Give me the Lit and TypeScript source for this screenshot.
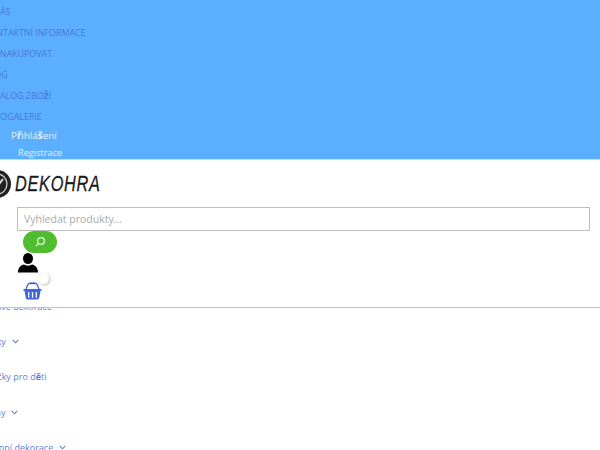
import { LitElement, html, css } from "lit";
import { customElement } from "lit/decorators.js";

const topMenu = [
  html`O NÁS`,
  html`KONTAKTNÍ INFORMACE`,
  html`JAK NAKUPOVAT`,
  html`BLOG`,
  html`KATALOG ZBO<b>Ž</b>Í`,
  html`FOTOGALERIE`,
];

const categories = [
  { label: html`Zdravé dekorace`, arrow: true },
  { label: html`Sošky`, arrow: true },
  { label: html`Hračky pro d<b>ě</b>ti`, arrow: false },
  { label: html`Rámy`, arrow: true },
  { label: html`Stranní dekorace`, arrow: true },
];

@customElement("app-root")
export class AppRoot extends LitElement {
  static styles = css`
    :host {
      display: block;
      width: 600px;
      height: 450px;
      overflow: hidden;
      background: #fff;
      font-family: "Open Sans", sans-serif;
    }

    .topbar {
      height: 160px;
      box-sizing: border-box;
      padding-top: 1px;
      background: #5caeff;
      border-bottom: 1px solid #b5e0ff;
    }

    .menu {
      list-style: none;
      margin: 0 0 0 -16px;
      padding: 0;
    }

    .menu li {
      height: 21px;
      line-height: 21px;
      font-size: 8.9px;
      color: #4679de;
      white-space: nowrap;
    }

    .account {
      display: flex;
      flex-direction: column;
      align-items: flex-start;
      color: #e6f3ff;
      line-height: 17px;
    }

    .account .login {
      margin-left: 11px;
      font-size: 9.8px;
    }

    .account .register {
      margin-left: 18px;
      font-size: 9.2px;
    }

    header {
      position: relative;
      z-index: 1;
      height: 148px;
      box-sizing: border-box;
      background: #fff;
      border-bottom: 1px solid #c4c4c4;
    }

    .logo {
      display: flex;
      align-items: center;
      gap: 3px;
      height: 47px;
      margin-left: -18px;
    }

    .logo span {
      font-family: "Liberation Sans", sans-serif;
      font-size: 22px;
      font-style: italic;
      color: #1b1b1b;
      letter-spacing: 1px;
      -webkit-text-stroke: 0.3px #1b1b1b;
      transform: scaleX(0.74);
      transform-origin: left center;
    }

    .search {
      box-sizing: border-box;
      display: block;
      width: 573px;
      height: 24px;
      margin-left: 17px;
      padding: 0 6px;
      border: 1px solid #bdbdbd;
      font-size: 10.5px;
      line-height: 22px;
      color: #aaaaaa;
    }

    .go {
      display: flex;
      align-items: center;
      justify-content: center;
      width: 34px;
      height: 22px;
      margin-left: 23px;
      border-radius: 11px;
      background: #4fbd2f;
    }

    .user {
      display: block;
      margin-left: 18px;
    }

    .cart {
      display: block;
      margin: 9px 0 0 23px;
    }

    .toggle {
      position: absolute;
      left: 38px;
      top: 113px;
      width: 11px;
      height: 11px;
      border-radius: 50%;
      background: #fff;
      box-shadow: 1px 1px 3px rgba(0, 0, 0, 0.25);
    }

    .categories {
      list-style: none;
      margin: -19px 0 0 -18px;
      padding: 0;
    }

    .categories li {
      display: flex;
      align-items: center;
      gap: 6px;
      height: 35.2px;
      font-size: 9px;
      color: #5e7fd6;
      white-space: nowrap;
    }
  `;

  render() {
    return html`
      <div class="topbar">
        <ul class="menu">
          ${topMenu.map((item) => html`<li>${item}</li>`)}
        </ul>
        <div class="account">
          <span class="login">P<b>ř</b>ihlá<b>š</b>ení</span>
          <span class="register">Registrace</span>
        </div>
      </div>
      <header>
        <div class="logo">
          <svg width="30" height="30" viewBox="0 0 30 30">
            <circle cx="15" cy="15" r="14" fill="#222" />
            <circle cx="15" cy="15" r="10" fill="none" stroke="#ddd" stroke-width="1.2" />
            <path d="M10 14l4 5 7-9" fill="none" stroke="#ddd" stroke-width="2" />
          </svg>
          <span>DEKOHRA</span>
        </div>
        <div class="search">Vyhledat produkty...</div>
        <div class="go">
          <svg width="12" height="12" viewBox="0 0 12 12" fill="none" stroke="#e8f8e0" stroke-width="1.2">
            <circle cx="7" cy="5" r="3.4" />
            <path d="M4.6 7.4L1.8 10.2" />
          </svg>
        </div>
        <svg class="user" width="20" height="20" viewBox="0 0 20 20">
          <ellipse cx="10" cy="5.5" rx="5" ry="5.5" fill="#000" />
          <path d="M0 19.5c0-5 3-7.5 6-8 2 1.5 6 1.5 8 0 3 .5 6 3 6 8z" fill="#000" />
        </svg>
        <svg class="cart" width="19" height="18" viewBox="0 0 20 19">
          <path d="M3 8L5 3Q5.5 1.5 7 1.5h6q1.5 0 2 1.5L17 8" fill="none" stroke="#3f66d6" stroke-width="1.4" />
          <rect x="6.5" y="0.5" width="7" height="2" rx="1" fill="#3f66d6" />
          <path d="M0.5 7.5h19v1.8h-1L17 17q-.2 1.5-2 1.5H5q-1.8 0-2-1.5L1.5 9.3h-1z" fill="#3f66d6" />
          <path d="M6 10.5v6M10 10.5v6M14 10.5v6" stroke="#fff" stroke-width="1.3" />
        </svg>
        <div class="toggle"></div>
      </header>
      <ul class="categories">
        ${categories.map(
          (c) => html`<li>
            <span>${c.label}</span>
            ${c.arrow
              ? html`<svg width="7" height="5" viewBox="0 0 7 5" fill="none" stroke="#5e7fd6" stroke-width="1.1">
                  <path d="M.7 .8L3.5 3.8 6.3 .8" />
                </svg>`
              : ""}
          </li>`
        )}
      </ul>
    `;
  }
}
